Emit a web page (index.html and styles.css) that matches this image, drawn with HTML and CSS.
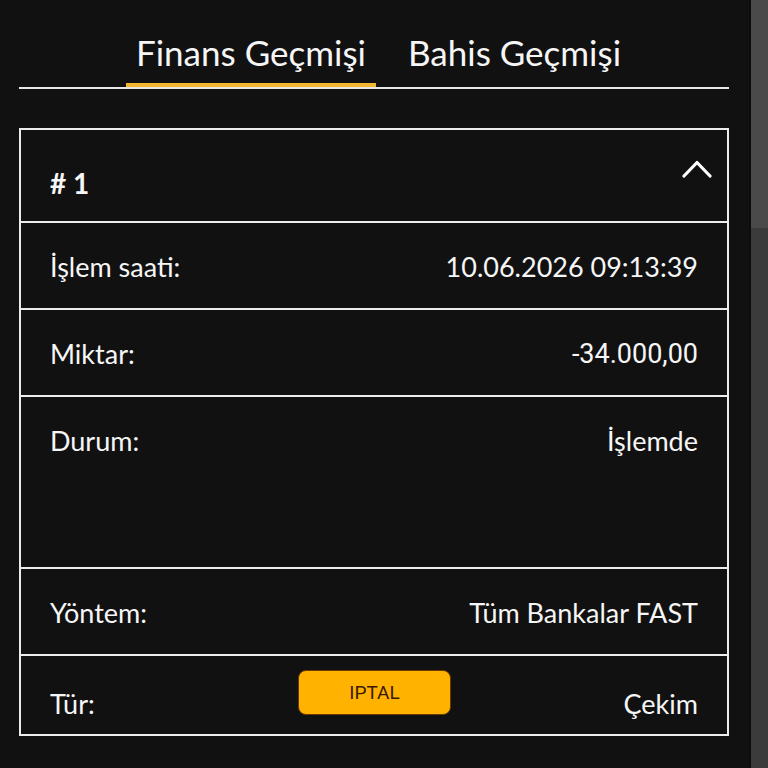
FILE: index.html
```html
<!DOCTYPE html>
<html lang="tr">
<head>
<meta charset="utf-8">
<title>Finans Geçmişi</title>
<link rel="stylesheet" href="styles.css">
</head>
<body>
<div class="page">
  <main class="main">
    <nav class="tabs">
      <div class="tab active">Finans Geçmişi</div>
      <div class="tab">Bahis Geçmişi</div>
    </nav>
    <section class="card">
      <div class="card-head">
        <span class="num"># 1</span>
        <svg class="chev" width="30" height="18" viewBox="0 0 30 18"><path d="M2 16 L15 2.5 L28 16" fill="none" stroke="#fff" stroke-width="3.2" stroke-linecap="round" stroke-linejoin="round"/></svg>
      </div>
      <div class="row"><span class="label">İşlem saati:</span><span class="value">10.06.2026 09:13:39</span></div>
      <div class="row"><span class="label">Miktar:</span><span class="value amount">-34.000,00</span></div>
      <div class="row tall"><span class="label">Durum:</span><span class="value">İşlemde</span></div>
      <div class="row"><span class="label">Yöntem:</span><span class="value">Tüm Bankalar FAST</span></div>
      <div class="row type">
        <span class="label">Tür:</span>
        <button class="cancel">IPTAL</button>
        <span class="value">Çekim</span>
      </div>
    </section>
  </main>
  <div class="scrollbar"><div class="thumb"></div></div>
</div>
</body>
</html>
```
FILE: styles.css
```css
html, body {
  margin: 0;
  padding: 0;
  background: #121111;
  height: 100%;
  overflow: hidden;
}
.page {
  display: flex;
  height: 768px;
  font-family: Lato, "Noto Sans", sans-serif;
  color: #f6f6f6;
}
.main {
  width: 749px;
  flex: none;
  box-sizing: border-box;
  padding: 0 20px 0 19px;
}
.tabs {
  display: flex;
  justify-content: center;
  gap: 22px;
  border-bottom: 2px solid #e6e6e6;
  padding-left: 9px;
}
.tab {
  font-size: 35px;
  line-height: 42px;
  padding: 31px 10px 10px;
  border-bottom: 4px solid transparent;
}
.tab.active {
  border-bottom-color: #f2b632;
}
.card {
  margin-top: 39px;
  border: 2px solid #ececec;
}
.card-head {
  display: flex;
  justify-content: space-between;
  align-items: flex-start;
  padding: 30px 15px 22px 29px;
}
.num {
  font-weight: 700;
  font-size: 28px;
  line-height: 32px;
  margin-top: 7px;
}
.chev {
  display: block;
}
.row {
  display: flex;
  justify-content: space-between;
  align-items: flex-start;
  border-top: 2px solid #ececec;
  padding: 28px 29px 25px;
  font-size: 27px;
  line-height: 32px;
}
.row.tall {
  padding-bottom: 110px;
}
.amount {
  font-family: Roboto, sans-serif;
}
.row.type {
  display: grid;
  grid-template-columns: 1fr auto 1fr;
  padding: 14px 29px 14px;
}
.row.type .label,
.row.type .value {
  padding-top: 18px;
}
.row.type .value {
  text-align: right;
}
.cancel {
  width: 153px;
  height: 45px;
  border: 1px solid #6b3a00;
  border-radius: 8px;
  background: #ffb300;
  color: #3a1800;
  font-family: Roboto, sans-serif;
  font-size: 19px;
  padding: 0;
  margin-left: 1px;
}
.scrollbar {
  flex: none;
  width: 19px;
  box-sizing: border-box;
  background: #3b3b3b;
  border-left: 2px solid #0c0c0c;
}
.thumb {
  height: 228px;
  background: #4a4a4a;
}
```
